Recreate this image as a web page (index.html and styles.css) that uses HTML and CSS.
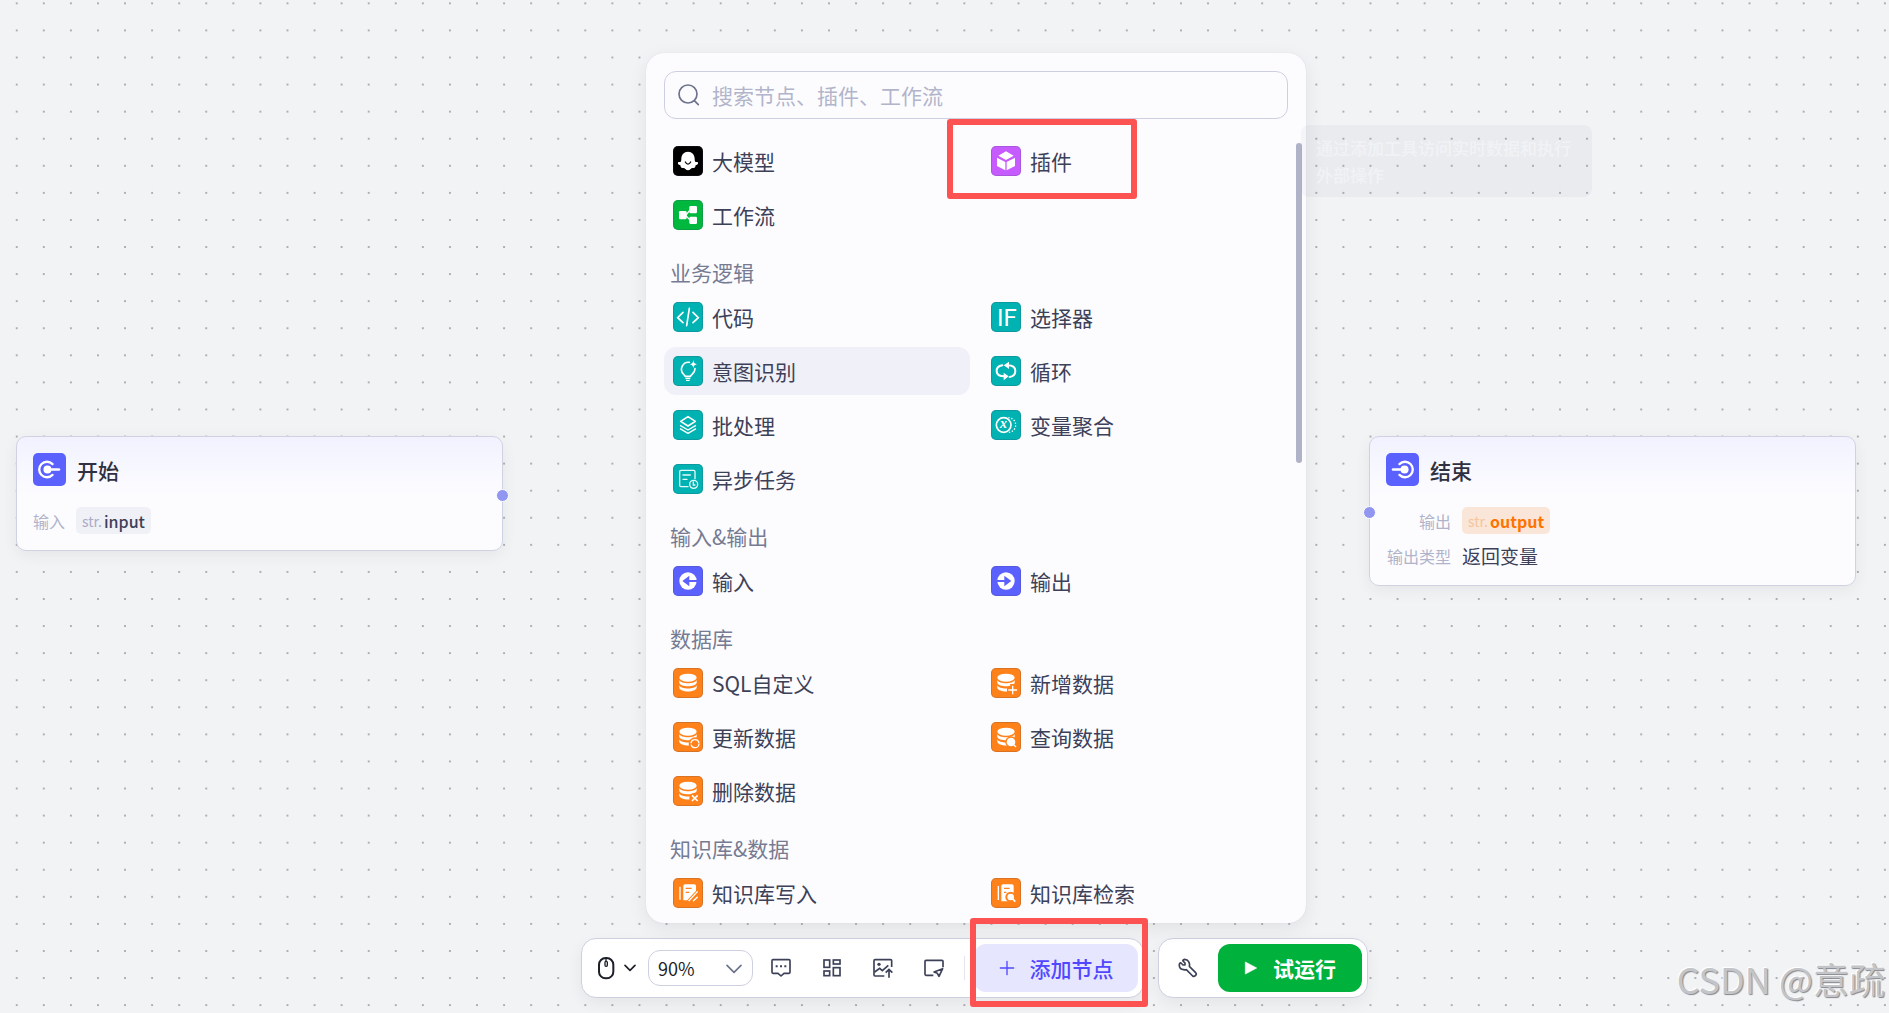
FILE: index.html
```html
<!DOCTYPE html>
<html lang="zh-CN">
<head>
    <meta charset="UTF-8">
    <meta name="viewport" content="width=device-width, initial-scale=1.0">
    <title>工作流</title>
    <link rel="stylesheet" href="styles.css">
</head>
<body>
    <!-- shared shapes -->
    <svg class="defs" aria-hidden="true">
        <defs>
            <pattern id="dots" width="20" height="20" patternUnits="userSpaceOnUse" patternTransform="translate(3.2 -10.2) scale(1.35375)">
                <circle cx="10" cy="10" r="0.65" fill="#8b8f96"/>
            </pattern>
            <g id="db">
                <ellipse cx="45" cy="29" rx="26" ry="12"/>
                <path d="M19 36C24 49 66 49 71 36V45C66 58 24 58 19 45Z"/>
                <path d="M19 52C24 65 66 65 71 52V60C66 74 24 74 19 60Z"/>
            </g>
        </defs>
    </svg>

    <main class="canvas">
        <svg class="grid" aria-hidden="true"><rect width="100%" height="100%" fill="url(#dots)"/></svg>

        <section class="node node-start">
            <div class="node-head">
                <svg class="node-icon" viewBox="0 0 98 98"><path d="M58 33A23 23 0 1 0 58 65" fill="none" stroke="#fff" stroke-width="7" stroke-linecap="round"/><circle cx="43" cy="49" r="12" fill="#fff"/><path d="M43 49H77" stroke="#fff" stroke-width="8" stroke-linecap="round"/></svg>
                <h2>开始</h2>
            </div>
            <div class="node-row">
                <span class="node-label">输入</span>
                <span class="tag"><small>str.</small>input</span>
            </div>
            <span class="port port-right"></span>
        </section>

        <section class="node node-end">
            <div class="node-head">
                <svg class="node-icon" viewBox="0 0 98 98"><path d="M40 33A23 23 0 1 1 40 65" fill="none" stroke="#fff" stroke-width="7" stroke-linecap="round"/><circle cx="55" cy="49" r="12" fill="#fff"/><path d="M55 49H21" stroke="#fff" stroke-width="8" stroke-linecap="round"/></svg>
                <h2>结束</h2>
            </div>
            <div class="node-row">
                <span class="node-label">输出</span>
                <span class="tag tag-orange"><small>str.</small>output</span>
            </div>
            <div class="node-row">
                <span class="node-label">输出类型</span>
                <span class="node-value">返回变量</span>
            </div>
            <span class="port port-left"></span>
        </section>

        <div class="dock">
            <div class="panel">
                <div class="search">
                    <svg viewBox="0 0 66 66"><g fill="none" stroke="#6d728c" stroke-width="5" stroke-linecap="round"><circle cx="30" cy="30" r="27"/><path d="M49 50L61 62"/></g></svg>
                    <input type="text" aria-label="搜索" placeholder="搜索节点、插件、工作流">
                </div>

                <div class="items">
                    <button class="item"><svg class="icon black" viewBox="0 0 90 90"><path d="M45 17C57 17 65 26 65 38C65 45 67 49 70 48C77 47 77 54 70 57Q66 58 67 62Q65 67 59 66Q55 66 53 69Q49 73 45 73Q41 73 37 69Q35 66 31 66Q25 67 23 62Q24 58 20 57C13 54 13 47 20 48C23 49 25 45 25 38C25 26 33 17 45 17Z" fill="#fff"/><path d="M37 48Q45 61 53 48" fill="none" stroke="#000" stroke-width="4" stroke-linecap="round"/></svg>大模型</button>
                    <button class="item"><svg class="icon purple" viewBox="0 0 90 90"><path d="M45 16L68 29L45 42L22 29ZM18 35L43 48V73L18 60ZM72 35L47 48V73L72 60Z" fill="#fff"/></svg>插件<span class="mark mark-plugin"></span></button>
                    <button class="item"><svg class="icon green" viewBox="0 0 90 90"><path d="M38 46L52 29M38 46L52 61" stroke="#fff" stroke-width="4"/><rect x="18" y="33" width="23" height="25" rx="4" fill="#fff"/><rect x="49" y="18" width="23" height="22" rx="4" fill="#fff"/><rect x="49" y="50" width="23" height="22" rx="4" fill="#fff"/></svg>工作流</button>
                </div>

                <h3>业务逻辑</h3>
                <div class="items">
                    <button class="item"><svg class="icon teal" viewBox="0 0 90 90"><path d="M30 31L14 47L30 62M60 31L76 47L60 62M49 19L41 71" fill="none" stroke="#fff" stroke-width="5" stroke-linecap="round"/></svg>代码</button>
                    <button class="item"><svg class="icon teal" viewBox="0 0 90 90"><text x="18" y="71" class="if-text">IF</text></svg>选择器</button>
                    <button class="item active"><svg class="icon teal" viewBox="0 0 90 90"><path d="M49 19A21 21 0 0 0 31 54L37 61H52L58 54A21 21 0 0 0 66 38" fill="none" stroke="#fff" stroke-width="5" stroke-linecap="round"/><path d="M37 67H52M39 73H50" stroke="#fff" stroke-width="4"/><path d="M61 12Q62 23 72 25Q62 27 61 37Q60 27 51 25Q60 23 61 12Z" fill="#fff"/></svg>意图识别</button>
                    <button class="item"><svg class="icon teal" viewBox="0 0 90 90"><path d="M34 28Q16 31 17 46Q18 61 40 61M56 63Q73 60 73 45Q73 28 50 28" fill="none" stroke="#fff" stroke-width="6" stroke-linecap="round"/><path d="M38 28L54 17V39ZM53 61L38 50V73Z" fill="#fff"/></svg>循环</button>
                    <button class="item"><svg class="icon teal" viewBox="0 0 90 90"><g fill="none" stroke="#fff" stroke-linejoin="round"><path d="M45 20L67 34L45 48L23 34Z" stroke-width="5"/><path d="M21 46L45 60L69 46M21 56L45 70L69 56" stroke-width="4"/></g></svg>批处理</button>
                    <button class="item"><svg class="icon teal" viewBox="0 0 90 90"><circle cx="38" cy="45" r="22" fill="none" stroke="#fff" stroke-width="5"/><path d="M52 23A22 22 0 0 1 52 67" fill="none" stroke="#fff" stroke-width="4" stroke-dasharray="4 5"/><text x="27" y="54" class="var-text">x</text></svg>变量聚合</button>
                    <button class="item"><svg class="icon teal" viewBox="0 0 90 90"><g fill="none" stroke="#e6fafa" stroke-width="4" stroke-linecap="round"><path d="M45 68H24Q20 68 20 64V23Q20 19 24 19H62Q66 19 66 23V44"/><path d="M30 33H52M30 46H42"/><circle cx="62" cy="61" r="12"/><path d="M61 54V63H66"/></g></svg>异步任务</button>
                </div>

                <h3>输入&amp;输出</h3>
                <div class="items">
                    <button class="item"><svg class="icon indigo" viewBox="0 0 90 90"><circle cx="45" cy="45" r="26" fill="#fff"/><path d="M28 45L49 29V42H72V48H49V61Z" fill="#5b61ff"/></svg>输入</button>
                    <button class="item"><svg class="icon indigo" viewBox="0 0 90 90"><circle cx="45" cy="45" r="26" fill="#fff"/><path d="M61 45L40 29V42H18V48H40V61Z" fill="#5b61ff"/></svg>输出</button>
                </div>

                <h3>数据库</h3>
                <div class="items">
                    <button class="item"><svg class="icon orange" viewBox="0 0 90 90"><use href="#db"/></svg>SQL自定义</button>
                    <button class="item"><svg class="icon orange" viewBox="0 0 90 90"><use href="#db"/><path d="M65 48V84M48 66H84" stroke="#ff811a" stroke-width="15"/><path d="M65 53V79M52 66H78" stroke="#fff" stroke-width="4"/></svg>新增数据</button>
                    <button class="item"><svg class="icon orange" viewBox="0 0 90 90"><use href="#db"/><circle cx="66" cy="65" r="19" fill="#ff811a"/><circle cx="66" cy="65" r="12" fill="none" stroke="#fff" stroke-width="4" stroke-dasharray="34 4"/></svg>更新数据</button>
                    <button class="item"><svg class="icon orange" viewBox="0 0 90 90"><use href="#db"/><circle cx="60" cy="60" r="17" fill="#ff811a"/><circle cx="60" cy="60" r="13"/><path d="M66 66L75 75" stroke="#fff" stroke-width="4"/></svg>查询数据</button>
                    <button class="item"><svg class="icon orange" viewBox="0 0 90 90"><use href="#db"/><circle cx="65" cy="66" r="16" fill="#ff811a"/><path d="M57 58L74 75M74 58L57 75" stroke="#fff" stroke-width="5"/></svg>删除数据</button>
                </div>

                <h3>知识库&amp;数据</h3>
                <div class="items">
                    <button class="item"><svg class="icon orange" viewBox="0 0 90 90"><path d="M21 26V65" stroke="#fff" stroke-width="4"/><path d="M36 19H64Q69 19 69 24V39L43 67H31V24Q31 19 36 19Z"/><path d="M38 31H56M38 43H49" stroke="#ff811a" stroke-width="4"/><path d="M71 43L47 69M75 53L58 70" stroke="#ff811a" stroke-width="8"/><path d="M74 40L47 69M74 56L60 70" stroke="#fff" stroke-width="4"/></svg>知识库写入</button>
                    <button class="item"><svg class="icon orange" viewBox="0 0 90 90"><path d="M22 24V66" stroke="#fff" stroke-width="4"/><path d="M36 19H63Q68 19 68 24V70H31V24Q31 19 36 19Z"/><path d="M39 31H56M39 43H46" stroke="#ff811a" stroke-width="4"/><circle cx="59" cy="57" r="16" fill="#ff811a"/><circle cx="59" cy="57" r="10"/><path d="M64 62L73 71" stroke="#fff" stroke-width="5"/></svg>知识库检索</button>
                </div>
                <span class="thumb"></span>
                <div class="tooltip" role="tooltip">通过添加工具访问实时数据和执行外部操作</div>
            </div>

            <div class="bars">
                <div class="bar">
                    <button class="mouse" aria-label="鼠标模式">
                        <svg width="18" height="24" viewBox="0 0 54 72"><g fill="none" stroke="#1d1f29"><rect x="6" y="6" width="43" height="61" rx="20" stroke-width="6"/><path d="M27 6V16" stroke-width="4"/><rect x="24" y="16" width="7" height="15" rx="3" stroke-width="4"/></g></svg>
                        <svg width="14" height="10" viewBox="0 0 42 30"><path d="M6 7L21 22L36 7" fill="none" stroke="#1d1f29" stroke-width="5" stroke-linecap="round" stroke-linejoin="round"/></svg>
                    </button>
                    <div class="zoom">
                        <select aria-label="缩放"><option>90%</option></select>
                        <svg width="18" height="12" viewBox="0 0 54 36"><path d="M6 7L27 28L48 7" fill="none" stroke="#6d728c" stroke-width="5" stroke-linecap="round" stroke-linejoin="round"/></svg>
                    </div>
                    <div class="tools">
                        <button aria-label="注释"><svg viewBox="0 0 60 60"><path d="M6 5H54Q57 5 57 8V43Q57 46 54 46H39L30 54L21 46H6Q3 46 3 43V8Q3 5 6 5Z" fill="none" stroke="#3d4158" stroke-width="5" stroke-linejoin="round"/><path d="M14 22h6v6h-6zM27 22h6v6h-6zM40 22h6v6h-6z" fill="#3d4158"/></svg></button>
                        <button aria-label="优化布局"><svg viewBox="0 0 60 60"><g fill="none" stroke="#3d4158" stroke-width="5"><rect x="6" y="6" width="17" height="22"/><rect x="34" y="6" width="20" height="12"/><rect x="6" y="39" width="17" height="14"/><rect x="34" y="29" width="20" height="24"/></g></svg></button>
                        <button aria-label="导出图片"><svg viewBox="0 0 60 60"><g fill="none" stroke="#3d4158" stroke-width="5"><path d="M34 54H6Q3 54 3 51V8Q3 5 6 5H53Q56 5 56 8V27"/><path d="M5 42L20 31L28 38L46 22" stroke-width="5"/><path d="M48 59V35M38 44L48 34L58 44"/></g><circle cx="18" cy="19" r="5" fill="#3d4158"/></svg></button>
                        <button aria-label="小地图"><svg viewBox="0 0 60 60"><g fill="none" stroke="#3d4158" stroke-width="5" stroke-linejoin="round"><path d="M28 52H6Q3 52 3 49V10Q3 7 6 7H54Q57 7 57 10V28"/><path d="M56 32L30 42L40 46L45 55Z"/></g></svg></button>
                    </div>
                    <span class="divider"></span>
                    <button class="add">
                        <svg width="16" height="16" viewBox="0 0 48 48"><path d="M24 4V44M4 24H44" stroke="#5147ff" stroke-width="4" stroke-linecap="round"/></svg>
                        添加节点
                        <span class="mark mark-add"></span>
                    </button>
                </div>
                <div class="bar">
                    <button class="wrench" aria-label="调试"><svg width="20" height="20" viewBox="0 0 60 60"><path d="M20 4Q12 6 16 10L21 15V21H15L9 15Q5 13 4 20Q3 34 17 35Q22 36 25 35L44 54Q48 57 52 53Q57 49 53 44L34 25Q36 17 32 11Q28 4 20 4Z" fill="none" stroke="#3d4158" stroke-width="5" stroke-linejoin="round"/></svg></button>
                    <button class="run"><svg width="14" height="14" viewBox="0 0 42 42"><path d="M4 3L38 21L4 39Z" fill="#fff" stroke="#fff" stroke-width="2" stroke-linejoin="round"/></svg>试运行</button>
                </div>
            </div>
        </div>

        <div class="watermark">CSDN @意疏</div>
    </main>
</body>
</html>
```
FILE: styles.css
```css
* {
    box-sizing: border-box;
}
body {
    margin: 0;
    font-family: "Noto Sans CJK SC", sans-serif;
    background-color: #f2f3f5;
    color: #3d4158;
}
button {
    display: flex;
    align-items: center;
    padding: 0;
    border: none;
    background: none;
    font: inherit;
    color: inherit;
    cursor: pointer;
}
.defs {
    position: absolute;
    width: 0;
    height: 0;
}
.canvas {
    position: relative;
    min-height: 100vh;
    overflow: hidden;
}
.grid {
    position: absolute;
    width: 100%;
    height: 100%;
}

/* nodes on the canvas */
.node {
    position: absolute;
    top: 436px;
    width: 487px;
    padding: 16px;
    border: 1px solid #d0d2e4;
    border-radius: 10px;
    background: linear-gradient(#f2f2ff, #fcfcff 60px);
    box-shadow: 0 4px 16px rgba(0, 0, 0, 0.06);
}
.node-start {
    left: 16px;
}
.node-end {
    left: 1369px;
}
.node-head {
    display: flex;
    align-items: center;
    gap: 11px;
    height: 33px;
    margin-bottom: 21px;
}
.node-icon {
    width: 33px;
    height: 33px;
    border-radius: 5px;
    background-color: #5b61ff;
}
h2 {
    margin: 0;
    font-size: 21px;
    font-weight: 500;
    line-height: 32px;
    color: #2f3140;
}
.node-row {
    display: flex;
    align-items: center;
    gap: 11px;
    height: 27px;
}
.node-row + .node-row {
    margin-top: 8px;
}
.node-label {
    font-size: 16px;
    color: #b0b3c9;
}
.node-end .node-label {
    width: 65px;
    text-align: right;
}
.node-value {
    font-size: 19px;
}
.tag {
    display: flex;
    align-items: center;
    gap: 2px;
    height: 27px;
    padding: 0 6px;
    border-radius: 5px;
    background-color: #f0f0f7;
    font-size: 16px;
    font-weight: 500;
}
.tag small {
    font-size: 14px;
    font-weight: 400;
    color: #a9acc5;
}
.tag-orange {
    background-color: #fae6d8;
    color: #ff7300;
    font-weight: 700;
}
.tag-orange small {
    color: #f6c49c;
}
.port {
    position: absolute;
    width: 13px;
    height: 13px;
    border: 1px solid #fff;
    border-radius: 50%;
    background-color: #9197f1;
}
.port-right {
    top: 52px;
    right: -7px;
}
.port-left {
    top: 69px;
    left: -7px;
}

/* add-node panel and toolbars */
.dock {
    position: absolute;
    left: 0;
    right: 0;
    bottom: 15px;
    padding-left: 60px;
    display: flex;
    flex-direction: column;
    align-items: center;
    gap: 15px;
}
.panel {
    position: relative;
    width: 660px;
    margin-left: 3px;
    padding: 18px 18px 6px;
    border-radius: 18px;
    background-color: #fcfcff;
    box-shadow: 0 0 1px #c9cbe0, 0 6px 20px rgba(0, 0, 0, 0.07);
}
.search {
    display: flex;
    align-items: center;
    gap: 12px;
    height: 48px;
    margin-bottom: 18px;
    padding: 0 13px;
    border: 1px solid #ced0e2;
    border-radius: 12px;
}
.search svg {
    width: 22px;
    height: 22px;
}
.search input {
    flex: 1;
    padding: 0;
    border: none;
    outline: none;
    background: none;
    font: inherit;
    font-size: 21px;
}
.search input::placeholder {
    color: #b2b5ca;
    opacity: 1;
}
.items {
    display: grid;
    grid-template-columns: 1fr 1fr;
    gap: 6px 12px;
}
.item {
    position: relative;
    gap: 9px;
    height: 48px;
    padding-left: 9px;
    border-radius: 12px;
    font-size: 21px;
}
.item.active {
    background-color: #f0f0f9;
}
.icon {
    width: 30px;
    height: 30px;
    border-radius: 5px;
    fill: #fff;
    box-shadow: inset 0 0 0 1px rgba(60, 60, 90, 0.2);
}
.black { background-color: #000; }
.purple { background-color: #c65cff; }
.green { background-color: #00b83e; }
.teal { background-color: #00b2b2; }
.indigo { background-color: #5b61ff; }
.orange { background-color: #ff811a; }
.if-text {
    font-family: Roboto, sans-serif;
    font-size: 72px;
}
.var-text {
    font-family: "Liberation Serif", serif;
    font-size: 42px;
    font-style: italic;
    font-weight: 700;
}
h3 {
    height: 54px;
    margin: 0;
    padding: 17px 0 0 6px;
    font-size: 21px;
    font-weight: 400;
    line-height: 32px;
    color: #767b92;
}
.thumb {
    position: absolute;
    top: 90px;
    right: 4px;
    width: 6px;
    height: 320px;
    border-radius: 3px;
    background-color: #b0b3c8;
}
.tooltip {
    position: absolute;
    top: 72px;
    left: 655px;
    width: 291px;
    padding: 9px 15px;
    border-radius: 8px;
    background-color: rgba(50, 50, 90, 0.04);
    color: rgba(255, 255, 255, 0.4);
    font-size: 17px;
    font-weight: 500;
    line-height: 27px;
}

/* red highlight frames */
.mark {
    position: absolute;
    border: 6px solid #fd5252;
    border-radius: 3px;
}
.mark-plugin {
    top: -18px;
    left: -35px;
    width: 190px;
    height: 80px;
}
.mark-add {
    top: -26px;
    left: -4px;
    width: 178px;
    height: 89px;
}

.bars {
    display: flex;
    gap: 14px;
}
.bar {
    display: flex;
    align-items: center;
    height: 60px;
    padding: 0 5px;
    border: 1px solid #ced0e2;
    border-radius: 15px;
    background-color: #fff;
    box-shadow: 0 6px 16px rgba(0, 0, 0, 0.06);
}
.mouse {
    gap: 8px;
    margin: 0 11px 0 10px;
}
.zoom {
    position: relative;
    margin-right: 2px;
}
.zoom select {
    appearance: none;
    width: 105px;
    height: 36px;
    padding: 0 9px;
    border: 1px solid #ced0e2;
    border-radius: 12px;
    background-color: #fff;
    font: inherit;
    font-size: 18px;
    color: #1d1f29;
}
.zoom svg {
    position: absolute;
    top: 13px;
    right: 10px;
    pointer-events: none;
}
.tools {
    display: flex;
}
.tools button {
    justify-content: center;
    width: 51px;
    height: 48px;
}
.tools svg {
    width: 20px;
    height: 20px;
}
.divider {
    width: 1px;
    height: 24px;
    margin: 0 9px 0 5px;
    background-color: #e3e4ec;
}
.add {
    position: relative;
    justify-content: center;
    gap: 15px;
    width: 164px;
    height: 48px;
    border-radius: 12px;
    background-color: #e6e7ff;
    color: #5147ff;
    font-size: 21px;
    font-weight: 500;
}
.wrench {
    justify-content: center;
    width: 48px;
    height: 48px;
    margin-right: 6px;
}
.run {
    justify-content: center;
    gap: 15px;
    width: 144px;
    height: 48px;
    border-radius: 12px;
    background-color: #00b23c;
    color: #fff;
    font-size: 21px;
    font-weight: 700;
}
.watermark {
    position: absolute;
    right: 4px;
    bottom: 9px;
    font-size: 36px;
    line-height: 52px;
    color: #c3c5c9;
    text-shadow: 1px 1px 1px #85878c, -1px -1px 0 #fff;
}
```
